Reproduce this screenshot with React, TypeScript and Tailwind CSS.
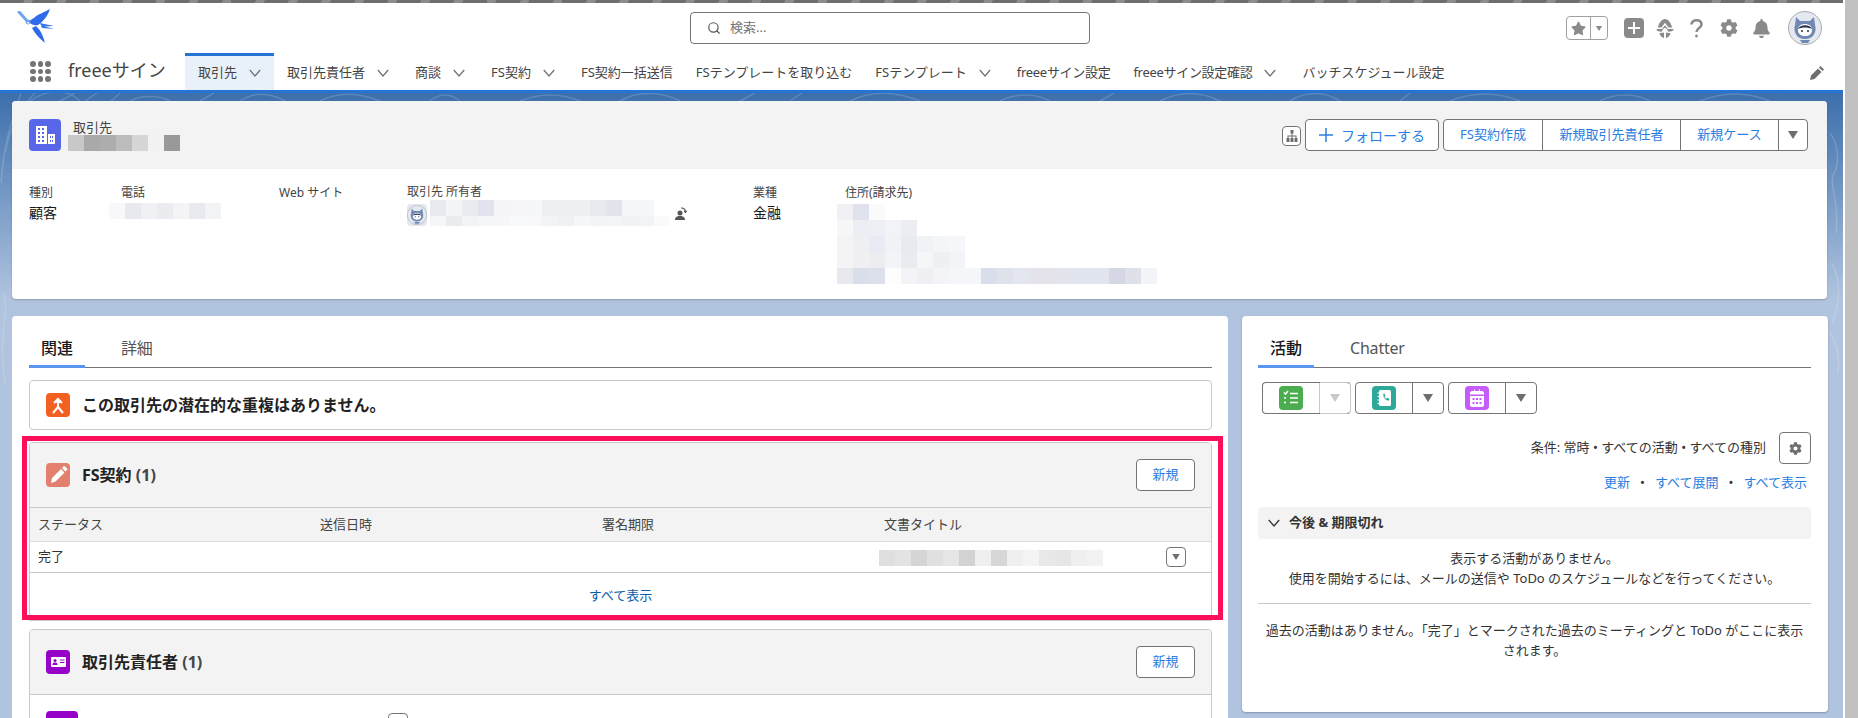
import clsx from "clsx";
import { Search } from "lucide-react";
import { FaBell, FaCog, FaStar } from "react-icons/fa";

const navItems = [
  { label: "取引先", menu: true, active: true },
  { label: "取引先責任者", menu: true },
  { label: "商談", menu: true },
  { label: "FS契約", menu: true },
  { label: "FS契約一括送信" },
  { label: "FSテンプレートを取り込む" },
  { label: "FSテンプレート", menu: true },
  { label: "freeeサイン設定", tight: true },
  { label: "freeeサイン設定確認", menu: true, tight: true },
  { label: "バッチスケジュール設定" },
];

const nameTiles = ["bg-[#c8c8c8]", "bg-[#a9a9a9]", "bg-[#adadad]", "bg-[#bcbcbc]", "bg-[#d6d6d6]", "bg-[#f2f2f2]", "bg-[#999999]"];
const phoneTiles = ["bg-[#f8f8fa]", "bg-[#e8e9ee]", "bg-[#f0f1f4]", "bg-[#ebecf0]", "bg-[#f4f4f6]", "bg-[#e9eaef]", "bg-[#f2f3f5]"];
const ownerTiles = [
  ["bg-[#e9eaf0]", "bg-[#f3f4f6]", "bg-[#eaebf1]", "bg-[#e1e4ef]", "bg-[#f5f5f8]", "bg-[#f6f6f9]", "bg-[#f6f7f9]", "bg-[#eeeff3]", "bg-[#eff0f4]", "bg-[#eef0f3]", "bg-[#e9eaee]", "bg-[#e2e5ed]", "bg-[#f5f6f9]", "bg-[#f6f7fa]"],
  ["bg-[#f5f6f8]", "bg-[#ebecf0]", "bg-[#f2f3f6]", "bg-[#f6f7f9]", "bg-[#f7f7fa]", "bg-[#f8f9fa]", "bg-[#f8f8fa]", "bg-[#f2f3f6]", "bg-[#f0f1f5]", "bg-[#f6f7f9]", "bg-[#f3f4f6]", "bg-[#f4f5f7]", "bg-[#f1f2f5]", "bg-[#f2f3f5]", "bg-[#fafafa]"],
];
const addressTiles = [
  ["bg-[#f0f0f5]", "bg-[#e0e3ed]", "bg-[#fbfbfc]"],
  ["bg-[#f6f7f9]", "bg-[#eceef3]", "bg-[#eeeff4]", "bg-[#f2f3f6]", "bg-[#ecedf2]"],
  ["bg-[#f4f4f6]", "bg-[#eeeff3]", "bg-[#e8ebf3]", "bg-[#f1f2f5]", "bg-[#e9eaef]", "bg-[#f0f3f5]", "bg-[#f4f5f6]", "bg-[#f6f7fa]"],
  ["bg-[#f4f4f6]", "bg-[#f0f0f3]", "bg-[#ecedf1]", "bg-[#f3f4f7]", "bg-[#eaebf0]", "bg-[#f5f6f8]", "bg-[#eff0f3]", "bg-[#f3f4f7]"],
  ["bg-[#e8e9ef]", "bg-[#d9deea]", "bg-[#dbe0eb]", "bg-[#fdfdfe]", "bg-[#f3f4f8]", "bg-[#f0eff3]", "bg-[#f3f4f7]", "bg-[#f5f6f9]", "bg-[#f5f6f9]", "bg-[#d9deea]", "bg-[#dfe2eb]", "bg-[#e4e6ef]", "bg-[#e4e2ea]", "bg-[#e3e3ec]", "bg-[#e3e5ee]", "bg-[#e1e5ed]", "bg-[#e2e5ee]", "bg-[#d5d8e4]", "bg-[#dee1e9]", "bg-[#f3f4f8]"],
];
const titleTiles = ["bg-[#dfdfdf]", "bg-[#e3e3e3]", "bg-[#d5d5d5]", "bg-[#e0e0e0]", "bg-[#e6e6e6]", "bg-[#d2d2d2]", "bg-[#efefef]", "bg-[#d7d7d7]", "bg-[#efefef]", "bg-[#f3f3f3]", "bg-[#e8e8e8]", "bg-[#e6e6e6]", "bg-[#efefef]", "bg-[#f2f2f2]"];

function Tiles({ colors, short }: { colors: string[]; short?: boolean }) {
  return (
    <div className="flex">
      {colors.map((c, i) => (
        <div key={i} className={clsx("w-4", short ? "h-[10px]" : "h-4", c)} />
      ))}
    </div>
  );
}

function Chevron({ className }: { className?: string }) {
  return (
    <svg viewBox="0 0 12 8" className={clsx("h-2 w-3 shrink-0", className)} fill="none" stroke="currentColor" strokeWidth="1.3">
      <path d="M.8 1l5.2 6 5.2-6" />
    </svg>
  );
}

function Caret({ className }: { className?: string }) {
  return (
    <svg viewBox="0 0 10 8" className={clsx("h-2 w-[10px]", className)} fill="currentColor">
      <path d="M0 0h10L5 8z" />
    </svg>
  );
}

function Bird() {
  return (
    <svg viewBox="0 0 40 34" className="h-[34px] w-10">
      <path d="M1 3c2-2 4-1 5 1l7 8-2 2z" fill="#6fa5f0" />
      <path d="M12 12c5-1 7-5 12-7l10-5c-2 6-6 12-12 16-3 1-7 0-10-4z" fill="#2f6be8" />
      <path d="M24 14l14 3-9 .5 9 2.500-12-1z" fill="#3c78ea" />
      <path d="M20 17c3 3 6 6 9 17-5-4-10-9-13-15z" fill="#2f6be8" />
      <circle cx="12" cy="13" r="2" fill="none" stroke="#6fa5f0" />
    </svg>
  );
}

function Mascot({ className }: { className?: string }) {
  return (
    <svg viewBox="0 0 34 34" className={className}>
      <circle cx="17" cy="17" r="16.500" fill="#e4e9f1" stroke="#a9a9a9" />
      <path d="M8 6l4 4h10l4-4 1 8c2 6-1 14-10 14S5 20 7 14z" fill="#7189b2" />
      <path d="M10 19c0-4 3-6 7-6s7 2 7 6-3 6-7 6-7-2-7-6z" fill="#fff" />
      <path d="M10 18c2-5 12-5 14 0-4-2-10-2-14 0z" fill="#22304d" />
      <circle cx="14" cy="20" r="1" fill="#22304d" />
      <circle cx="20" cy="20" r="1" fill="#22304d" />
      <path d="M12 29h10l-2 3h-6z" fill="#7189b2" />
    </svg>
  );
}

function Building() {
  return (
    <svg viewBox="0 0 32 32" className="h-8 w-8" fill="#fff">
      <path fillRule="evenodd" d="M7 7h11v18H7zm2 2v2h2V9zm4 0v2h2V9zm-4 4v2h2v-2zm4 0v2h2v-2zm-4 4v2h2v-2zm4 0v2h2v-2zm-4 4v2h2v-2zm4 0v2h2v-2z" />
      <path fillRule="evenodd" d="M19 15h7v10h-7zm2 2v2h1v-2zm2 0v2h1v-2zm-2 4v2h1v-2zm2 0v2h1v-2z" />
    </svg>
  );
}

function MergeIcon() {
  return (
    <svg viewBox="0 0 24 24" className="h-6 w-6" fill="none" stroke="#fff" strokeWidth="2">
      <path d="M12 15V7" />
      <path d="M8 10l4-4 4 4" fill="#fff" />
      <path d="M12 14l-5 6M12 14l5 6" />
    </svg>
  );
}

function PencilIcon() {
  return (
    <svg viewBox="0 0 24 24" className="h-6 w-6" fill="#fff">
      <path d="M15 6l3.500 3.500L9.500 18.500 5 20l1-5zM16 5l1.500-1.500a1 1 0 0 1 1.500 0l2 2a1 1 0 0 1 0 1.500L19.500 8.500z" />
    </svg>
  );
}

function ContactIcon() {
  return (
    <svg viewBox="0 0 24 24" className="h-6 w-6">
      <rect x="5" y="7" width="15" height="10" rx="1" fill="#fff" />
      <circle cx="9" cy="10.500" r="1.500" fill="#9602c7" />
      <path d="M6.500 15c0-2 1-2.500 2.500-2.500s2.500.5 2.500 2.500z" fill="#9602c7" />
      <path d="M14 10h4.500M14 12.500h4.500" stroke="#9602c7" />
    </svg>
  );
}

function TaskIcon() {
  return (
    <svg viewBox="0 0 24 24" className="h-6 w-6" fill="none" stroke="#fff" strokeWidth="1.600">
      <path d="M5 6.500l1.500 1.500L9 5M11 7.500h8M11 12h8M11 16.500h8M5 12h2M5 16.500h2" />
    </svg>
  );
}

function PhoneBookIcon() {
  return (
    <svg viewBox="0 0 24 24" className="h-6 w-6">
      <rect x="7" y="4" width="12" height="16" rx="1.500" fill="#fff" />
      <path d="M5.500 7h3M5.500 10.500h3M5.500 14h3M5.500 17.500h3" stroke="#fff" />
      <path d="M11 8l1.500-.5 1 2.500-1 .8c.5 1 1 1.500 2 2l.8-1 2.200 1.200-.5 1.500c-3 .5-6.500-3.500-5.500-6.500z" fill="#2fa899" />
    </svg>
  );
}

function CalendarIcon() {
  return (
    <svg viewBox="0 0 24 24" className="h-6 w-6" fill="#fff">
      <path fillRule="evenodd" d="M7 5h2V3.500h1V5h4V3.500h1V5h2c1 0 2 1 2 2v1.500H5V7c0-1 1-2 2-2zM5 10h14v9c0 1-1 2-2 2H7c-1 0-2-1-2-2zm2.500 2v2h2v-2zm3.500 0v2h2v-2zm3.500 0v2h2v-2zM7.500 16v2h2v-2zm3.500 0v2h2v-2zm3.500 0v2h2v-2z" />
    </svg>
  );
}

function HierarchyIcon() {
  return (
    <svg viewBox="0 0 12 12" className="h-3 w-3" fill="#6e6e6e">
      <path d="M4.500 0h3v3.500h-1V5.500H10.500V8H11.500v4h-3V8h1V6.500h-3V8H7.500v4h-3V8h1V6.500h-3V8H3.500v4h-3V8h1V5.500H5.500V3.500h-1z" />
    </svg>
  );
}

function TrailIcon() {
  return (
    <svg viewBox="0 0 20 20" className="h-[19px] w-5" fill="#8a8a8a">
      <path d="M10 0C6.500 0 3.500 4.500 2.500 9h3.800L10 4l3.700 5h3.800C16.500 4.500 13.500 0 10 0z" />
      <path d="M10 6.500L7 10.500h1.500L10 9l1.500 1.500H13z" />
      <path d="M1 10.500h7l-1.500 3L3 13C1.800 12.500 1 11.500 1 10.500zM12 10.500h7c0 1-.8 2-2 2.500l-3.500.5zM4 15l5-.8V20c-2.200-.3-4-2.500-5-5zM11 14.200l5 .8c-1 2.500-2.800 4.700-5 5z" />
    </svg>
  );
}

function QuestionMark() {
  return (
    <svg viewBox="0 0 13 19" className="h-[19px] w-[13px]" fill="none" stroke="#8a8a8a" strokeWidth="2.600">
      <path d="M1.500 5.500C1.500 3 3.500 1.300 6.500 1.300s5 1.700 5 4.200c0 3.500-5 3.500-5 7.500" />
      <circle cx="6.500" cy="17" r="1" fill="#8a8a8a" strokeWidth="1" />
    </svg>
  );
}

function OwnerChangeIcon() {
  return (
    <svg viewBox="0 0 14 16" className="h-4 w-[14px]" fill="#555">
      <circle cx="6" cy="8" r="2.500" />
      <path d="M1 15c0-3 2-4 5-4s5 1 5 4zM7 2.500c2.500-.5 4.500 1 5 3.500l1.500-.5-2 3-2-2.500 1.200-.2c-.4-1.500-1.800-2.500-3.500-2.300z" />
    </svg>
  );
}

// 背景の等高線模様
function Topo() {
  return (
    <svg viewBox="0 0 1843 300" preserveAspectRatio="none" className="absolute inset-x-0 top-0 h-[300px] w-full" fill="none" stroke="#fff" strokeOpacity="0.16" strokeWidth="1.500">
      <path d="M5 60c6-30 20-50 30-60M1 90c3-40 10-60 20-90M3 200c8 20-6 40 2 90" />
      <path d="M30 8c20-14 40-10 50 0s25 8 40-8M60 8l15-8M85 8l12-8M130 8c10-6 30-6 40 0M200 8l14-8M240 8c15-10 30-8 45 0M320 8c20-10 40-8 60 0M430 8c10-8 20-8 30 0M520 8c20-8 40-8 60 0M620 8c20-12 45-8 60 0M740 8l15-8M790 8l12-8M850 8c25-12 50-8 70 0M1000 8c15-8 35-8 50 0M1100 8l14-8M1160 8c20-10 40-10 60 0M1290 8c15-10 35-10 50 0M1400 8l10-8M1450 8c25-10 50-8 70 0M1600 8c15-8 35-8 50 0M1700 8c25-10 50-8 70 0" />
      <path d="M1830 40c8 10 10 30 4 40s6 30 2 60M1832 170c10 20 8 40 0 60M1830 240c6 10 10 20 8 40" />
    </svg>
  );
}

function Card({ title, count, iconBg, icon, children }: { title: string; count: number; iconBg: string; icon: React.ReactNode; children?: React.ReactNode }) {
  return (
    <section className="overflow-hidden rounded-t border border-[#c9c9c9]">
      <div className="flex h-[65px] items-center justify-between border-b border-[#c9c9c9] bg-[#f3f3f3] pl-4 pr-4">
        <div className="flex items-center gap-3">
          <div className={clsx("flex h-6 w-6 items-center justify-center rounded", iconBg)}>{icon}</div>
          <h2 className="text-[16px] font-bold leading-6 text-[#222]">
            {title} <span className="text-[16px] text-[#444]">({count})</span>
          </h2>
        </div>
        <NewButton />
      </div>
      {children}
    </section>
  );
}

function NewButton() {
  return (
    <button className="h-8 w-[59px] rounded border border-[#747474] bg-white text-[13px] text-[#2a7de1]">新規</button>
  );
}

function SplitButton({ iconBg, disabled, children }: { iconBg: string; disabled?: boolean; children: React.ReactNode }) {
  return (
    <div className={clsx("flex h-8 w-[89px] rounded border bg-white", disabled ? "border-y-[#747474] border-l-[#747474] border-r-[#c9c9c9]" : "border-[#747474]")}>
      <div className={clsx("flex w-[57px] items-center justify-center border-r", disabled ? "border-[#c9c9c9]" : "border-[#747474]")}>
        <div className={clsx("flex h-6 w-6 items-center justify-center rounded", iconBg)}>{children}</div>
      </div>
      <div className={clsx("flex flex-1 items-center justify-center", disabled && "-my-px rounded-r border-y border-[#c9c9c9]")}>
        <Caret className={disabled ? "text-[#c9c9c9]" : "text-[#6e6e6e]"} />
      </div>
    </div>
  );
}

function Tabs({ tabs }: { tabs: string[] }) {
  return (
    <div className="flex h-[52px] items-end border-b border-[#747474]">
      <div className="relative flex h-[29px] w-14 justify-center text-[16px] font-medium leading-5 text-[#181818]">
        {tabs[0]}
        <div className="absolute inset-x-0 -bottom-px h-[3px] bg-[#5a95f0]" />
      </div>
      <div className="flex h-[29px] pl-9 text-[16px] leading-5 tracking-[-0.2px] text-[#555]">{tabs[1]}</div>
    </div>
  );
}

export default function App() {
  return (
    <div className="flex h-[718px] w-[1858px] overflow-hidden bg-white font-['Noto_Sans','Noto_Sans_CJK_JP',sans-serif] text-[13px] text-[#333]">
      <div className="flex w-[1843px] flex-col">
        <div className="h-[3px] shrink-0 bg-[repeating-linear-gradient(115deg,#6e6e6e_0,#6e6e6e_22px,#8c8c8c_22px,#8c8c8c_30px)]" />

        <header className="flex h-[41px] shrink-0 items-center pl-[16px] pr-[21px]">
          <div className="w-[674px] pt-1">
            <Bird />
          </div>
          <div className="mt-[9px] flex h-8 w-[400px] items-center gap-[9px] rounded border border-[#747474] pl-[16px] text-[13px] text-[#747474]">
            <Search className="h-[14px] w-[14px] text-[#555]" strokeWidth={2} />
            検索...
          </div>
          <div className="ml-auto mt-[9px] flex items-center text-[#8a8a8a]">
            <div className="flex h-6 w-[42px] rounded border border-[#a0a0a0]">
              <div className="flex w-6 items-center justify-center border-r border-[#a0a0a0]">
                <FaStar className="h-[15px] w-[15px]" />
              </div>
              <div className="flex flex-1 items-center justify-center">
                <Caret className="h-[5px] w-2" />
              </div>
            </div>
            <div className="ml-4 flex h-5 w-5 items-center justify-center rounded bg-[#8a8a8a]">
              <svg viewBox="0 0 12 12" className="h-3 w-3" stroke="#fff" strokeWidth="2">
                <path d="M6 0v12M0 6h12" />
              </svg>
            </div>
            <div className="ml-[11px]">
              <TrailIcon />
            </div>
            <div className="ml-[15px]">
              <QuestionMark />
            </div>
            <FaCog className="ml-[17px] h-[18px] w-[18px]" />
            <FaBell className="ml-[14px] h-[19px] w-[19px]" />
            <Mascot className="ml-[17px] h-[34px] w-[34px]" />
          </div>
        </header>

        <nav className="flex h-[46px] shrink-0 items-stretch pl-[30px] pr-[19px]">
          <div className="mt-[17px] grid h-[21px] w-[21px] grid-cols-3 gap-[2px]">
            {Array.from({ length: 9 }).map((_, i) => (
              <div key={i} className="h-[5.700px] w-[5.700px] rounded-full bg-[#747474]" />
            ))}
          </div>
          <div className="ml-[17px] w-[117px] pt-[14px] text-[18px] leading-6 text-[#444]">freeeサイン</div>
          {navItems.map((item) => (
            <div
              key={item.label}
              className={clsx(
                "flex items-center gap-3 pl-[13px] text-[13px] text-[#444]",
                item.tight && "tracking-[-0.3px]",
                item.menu ? "pr-[13px]" : "pr-[10px]",
                item.active ? "mt-[9px] border-t-[3px] border-[#2574d4] bg-[#e8f0fa]" : "mt-[12px]",
              )}
            >
              <span className="whitespace-nowrap">{item.label}</span>
              {item.menu && <Chevron className="text-[#747474]" />}
            </div>
          ))}
          <svg viewBox="0 0 14 14" className="ml-auto mt-[22px] h-[14px] w-[14px]" fill="#6e6e6e">
            <path d="M10.500 0L14 3.500l-1.500 1.500L9 1.500zM8 2.500L11.500 6l-7 7L0 14l1-4.500z" />
          </svg>
        </nav>

        <div className="h-[3px] shrink-0 bg-[#2574d4]" />

        <main className="relative min-h-0 flex-1 overflow-hidden bg-[linear-gradient(180deg,#3c6fab_0,#b0c4df_207px)] pl-3 pt-2">
          <Topo />

          <section className="relative w-[1815px] overflow-hidden rounded bg-white shadow-[0_1px_2px_rgba(0,0,0,0.2)]">
            <div className="flex h-[68px] items-center justify-between bg-[#f3f3f3] pl-[17px] pr-[19px]">
              <div className="flex items-center">
                <div className="h-8 w-8 rounded bg-[#5867e8]">
                  <Building />
                </div>
                <div className="ml-[7px]">
                  <div className="pl-[5px] text-[13px] leading-4 text-[#444]">取引先</div>
                  <Tiles colors={nameTiles} />
                </div>
              </div>
              <div className="flex items-center text-[13px] text-[#2a7de1]">
                <button className="mr-1 mt-[2px] flex h-5 w-[19px] items-center justify-center rounded border border-[#747474] bg-white">
                  <HierarchyIcon />
                </button>
                <button className="flex h-8 w-[134px] items-center justify-center gap-2 rounded border border-[#747474] bg-white text-[14px]">
                  <svg viewBox="0 0 14 14" className="h-[14px] w-[14px]" stroke="#2a7de1" strokeWidth="1.500">
                    <path d="M7 0v14M0 7h14" />
                  </svg>
                  フォローする
                </button>
                <div className="ml-1 flex h-8 rounded border border-[#747474] bg-white">
                  <div className="flex w-[99px] items-center justify-center border-r border-[#747474]">FS契約作成</div>
                  <div className="flex w-[138px] items-center justify-center border-r border-[#747474]">新規取引先責任者</div>
                  <div className="flex w-[98px] items-center justify-center border-r border-[#747474]">新規ケース</div>
                  <div className="flex w-[28px] items-center justify-center">
                    <Caret className="text-[#6e6e6e]" />
                  </div>
                </div>
              </div>
            </div>

            <div className="grid h-[130px] grid-cols-[92px_158px_128px_346px_92px_1fr] pl-[17px] pt-4 text-[12px] leading-4 text-[#444]">
              <div>
                <div>種別</div>
                <div className="mt-[2px] text-[14px] leading-5 text-[#181818]">顧客</div>
              </div>
              <div>
                <div>電話</div>
                <div className="-ml-3 mt-[2px]">
                  <Tiles colors={phoneTiles} />
                </div>
              </div>
              <div>Web サイト</div>
              <div>
                <div className="-mt-[1px]">取引先 所有者</div>
                <div className="flex">
                  <div className="mt-[4px] flex h-[22px] w-[20px] items-center justify-center overflow-hidden rounded bg-[#e4e9f1]">
                    <Mascot className="h-[20px] w-[20px]" />
                  </div>
                  <div className="ml-[3px]">
                    <Tiles colors={ownerTiles[0]} />
                    <Tiles colors={ownerTiles[1]} short />
                  </div>
                  <div className="ml-[4px] mt-[5px]">
                    <OwnerChangeIcon />
                  </div>
                </div>
              </div>
              <div>
                <div>業種</div>
                <div className="mt-[2px] text-[14px] leading-5 text-[#181818]">金融</div>
              </div>
              <div>
                <div>住所(請求先)</div>
                <div className="-ml-2 mt-[3px]">
                  {addressTiles.map((row, i) => (
                    <Tiles key={i} colors={row} />
                  ))}
                </div>
              </div>
            </div>
          </section>

          <div className="relative mt-[17px] flex items-start gap-[14px]">
            <div className="relative w-[1216px] rounded-t bg-white pb-10 pl-[17px] pr-4">
              <Tabs tabs={["関連", "詳細"]} />

              <div className="mt-3 flex h-[50px] items-center gap-3 rounded border border-[#c9c9c9] pl-4">
                <div className="flex h-6 w-6 items-center justify-center rounded bg-[#f26122]">
                  <MergeIcon />
                </div>
                <p className="text-[16px] font-bold text-[#222]">この取引先の潜在的な重複はありません。</p>
              </div>

              <div className="mt-3">
                <Card title="FS契約" count={1} iconBg="bg-[#e27f6f]" icon={<PencilIcon />}>
                  <div className="grid h-[34px] grid-cols-[282px_282px_282px_1fr] items-center border-b border-[#dcdcdc] bg-[#f3f3f3] pl-2 text-[#444]">
                    <div>ステータス</div>
                    <div>送信日時</div>
                    <div>署名期限</div>
                    <div>文書タイトル</div>
                  </div>
                  <div className="grid h-[31px] grid-cols-[282px_282px_282px_1fr] items-center border-b border-[#c9c9c9] pl-2">
                    <div>完了</div>
                    <div />
                    <div />
                    <div className="-ml-[5px] flex items-center">
                      <div className="mt-[2px]">
                        <Tiles colors={titleTiles} />
                      </div>
                      <button className="ml-[63px] flex h-5 w-5 items-center justify-center rounded border border-[#747474]">
                        <Caret className="h-[6px] w-2 text-[#6e6e6e]" />
                      </button>
                    </div>
                  </div>
                  <div className="flex h-[47px] justify-center pt-[13px] text-[#0b5cab]">すべて表示</div>
                </Card>
              </div>

              <div className="mt-2">
                <Card title="取引先責任者" count={1} iconBg="bg-[#9602c7]" icon={<ContactIcon />}>
                  <div className="flex pl-4 pt-4">
                    <div className="h-8 w-8 rounded bg-[#9602c7]" />
                    <div className="ml-[310px] mt-[2px] h-5 w-5 rounded border border-[#747474]" />
                  </div>
                </Card>
              </div>

              {/* 赤枠の注釈 */}
              <div className="pointer-events-none absolute left-[10px] top-[120px] h-[184px] w-[1201px] border-[5px] border-[#ff0f5a]" />
            </div>

            <aside className="h-[396px] w-[586px] rounded bg-white pl-4 pr-[17px] shadow-[0_1px_2px_rgba(0,0,0,0.25)]">
              <Tabs tabs={["活動", "Chatter"]} />

              <div className="mt-[14px] flex gap-1 pl-1">
                <SplitButton iconBg="bg-[#4bad50]" disabled>
                  <TaskIcon />
                </SplitButton>
                <SplitButton iconBg="bg-[#2fa899]">
                  <PhoneBookIcon />
                </SplitButton>
                <SplitButton iconBg="bg-[#c65cfb]">
                  <CalendarIcon />
                </SplitButton>
              </div>

              <div className="mt-[18px] flex items-center justify-end gap-[13px] text-[#333]">
                <span>条件: 常時 • すべての活動 • すべての種別</span>
                <button className="flex h-8 w-8 items-center justify-center rounded border border-[#747474]">
                  <FaCog className="h-[13px] w-[13px] text-[#6e6e6e]" />
                </button>
              </div>

              <div className="mt-2 flex justify-end gap-[10px] pr-1 leading-5 text-[#2a7de1]">
                <span>更新</span>
                <span className="text-[#333]">•</span>
                <span>すべて展開</span>
                <span className="text-[#333]">•</span>
                <span>すべて表示</span>
              </div>

              <div className="mt-[15px] flex h-8 items-center gap-[9px] rounded bg-[#f3f3f3] pl-[10px] font-bold text-[#333]">
                <Chevron className="text-[#333]" />
                今後 &amp; 期限切れ
              </div>

              <p className="mt-[9px] border-b border-[#c9c9c9] pb-[15px] text-center leading-5">
                表示する活動がありません。
                <br />
                使用を開始するには、メールの送信や ToDo のスケジュールなどを行ってください。
              </p>

              <p className="mt-4 text-center leading-5">
                過去の活動はありません。「完了」とマークされた過去のミーティングと ToDo がここに表示
                <br />
                されます。
              </p>
            </aside>
          </div>
        </main>
      </div>
      <div className="w-[2px] bg-white" />
      <div className="w-[13px] bg-[#c1c1c1]" />
    </div>
  );
}
